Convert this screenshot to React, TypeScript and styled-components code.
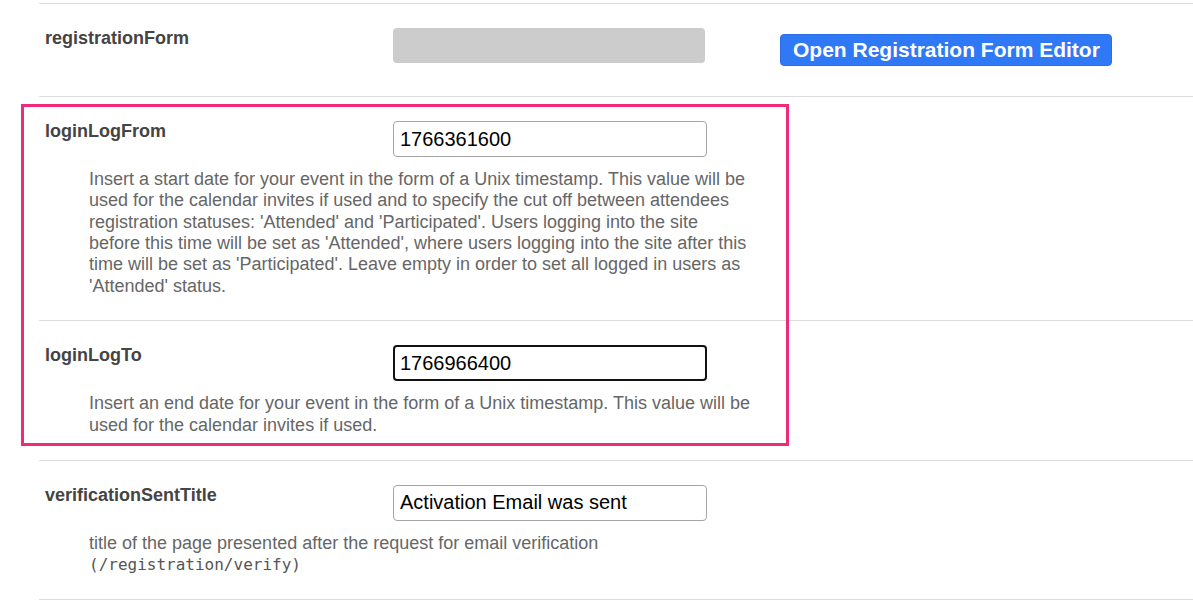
import React from "react";
import styled, { createGlobalStyle, css } from "styled-components";

const GlobalStyle = createGlobalStyle`
  html, body {
    margin: 0;
    padding: 0;
    background: #ffffff;
  }
  body {
    font-family: "Liberation Sans", Arial, sans-serif;
  }
`;

const Page = styled.div`
  padding: 3px 0 0 39px;
  width: 1154px;
`;

const Row = styled.div`
  display: grid;
  grid-template-columns: 348px 387px auto;
  align-items: start;
  border-top: 1px solid #dddddd;
  padding: 24px 0 0 6px;
`;

const LastRule = styled.div`
  border-top: 1px solid #dddddd;
`;

const Label = styled.div`
  font-size: 18px;
  font-weight: bold;
  color: #444444;
  line-height: 18px;
  padding-top: 1px;
`;

const Placeholder = styled.div`
  width: 312px;
  height: 35px;
  background: #cccccc;
  border-radius: 4px;
  margin-bottom: 33px;
`;

const EditorButton = styled.button`
  justify-self: start;
  margin-top: 6px;
  height: 32px;
  width: 332px;
  padding: 0 0 0 12px;
  text-align: left;
  background: #2f78f6;
  border: 1px solid #2a6fe6;
  border-radius: 4px;
  color: #ffffff;
  font-family: "Liberation Sans", Arial, sans-serif;
  font-size: 21px;
  font-weight: bold;
  line-height: 30px;
  white-space: nowrap;
  cursor: pointer;
`;

const TextInput = styled.input<{ $focused?: boolean }>`
  box-sizing: border-box;
  width: 314px;
  height: 36px;
  border: 1px solid #a5a5a5;
  border-radius: 4px;
  padding: 0 6px;
  font-family: "Liberation Sans", Arial, sans-serif;
  font-size: 20px;
  color: #000000;
  background: #ffffff;
  outline: none;
  ${(p) =>
    p.$focused &&
    css`
      border: 2px solid #111111;
      padding: 0 5px;
    `}
`;

const Description = styled.div`
  grid-column: 1 / -1;
  margin: 12px 0 0 44px;
  font-size: 18px;
  line-height: 21.33px;
  color: #666666;
  white-space: nowrap;
  padding-bottom: 23.5px;
`;

const Code = styled.code`
  font-family: "DejaVu Sans Mono", "Liberation Mono", monospace;
  font-size: 16px;
  color: #555555;
`;

const Highlighted = styled.div`
  position: relative;
`;

const HighlightFrame = styled.div`
  position: absolute;
  left: -18px;
  top: 8px;
  width: 768px;
  height: 342px;
  box-sizing: border-box;
  border: 3px solid #ee2a7b;
  pointer-events: none;
`;

export default function App() {
  return (
    <>
      <GlobalStyle />
      <Page>
        <Row>
          <Label>registrationForm</Label>
          <Placeholder />
          <EditorButton>Open Registration Form Editor</EditorButton>
        </Row>
        <Highlighted>
          <Row>
            <Label>loginLogFrom</Label>
            <TextInput defaultValue="1766361600" readOnly />
            <Description>
              Insert a start date for your event in the form of a Unix timestamp. This value will be
              <br />
              used for the calendar invites if used and to specify the cut off between attendees
              <br />
              registration statuses: 'Attended' and 'Participated'. Users logging into the site
              <br />
              before this time will be set as 'Attended', where users logging into the site after this
              <br />
              time will be set as 'Participated'. Leave empty in order to set all logged in users as
              <br />
              'Attended' status.
            </Description>
          </Row>
          <Row>
            <Label>loginLogTo</Label>
            <TextInput $focused defaultValue="1766966400" readOnly />
            <Description>
              Insert an end date for your event in the form of a Unix timestamp. This value will be
              <br />
              used for the calendar invites if used.
            </Description>
          </Row>
          <HighlightFrame />
        </Highlighted>
        <Row>
          <Label>verificationSentTitle</Label>
          <TextInput defaultValue="Activation Email was sent" readOnly />
          <Description>
            title of the page presented after the request for email verification
            <br />
            <Code>(/registration/verify)</Code>
          </Description>
        </Row>
        <LastRule />
      </Page>
    </>
  );
}
